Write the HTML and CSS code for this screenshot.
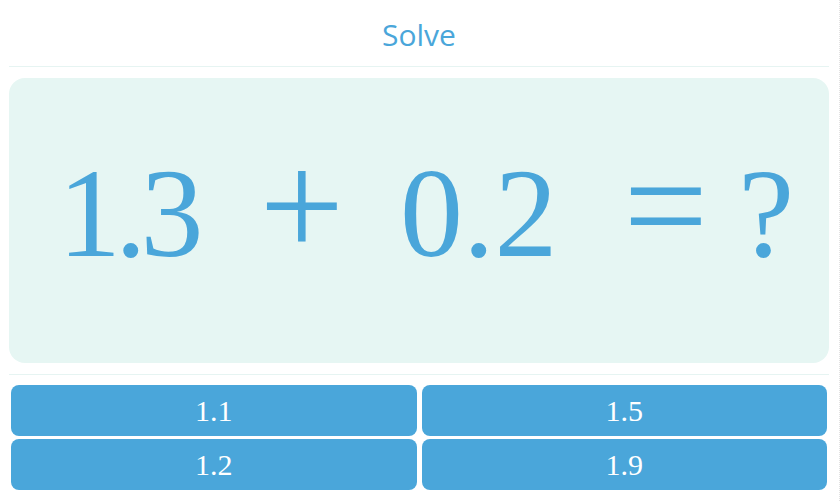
FILE: index.html
```html
<!DOCTYPE html>
<html lang="en">
<head>
    <meta charset="UTF-8">
    <meta name="viewport" content="width=device-width, initial-scale=1.0">
    <title>Solve</title>
    <link rel="stylesheet" href="styles.css">
</head>
<body>
  <div class="quiz">
    <div class="quiz-header">Solve</div>
    <div class="question-card">
      <div class="equation">
        <span class="num first">1.3</span>
        <span class="op plus">+</span>
        <span class="num">0.2</span>
        <span class="op equals">=</span>
        <span class="num">?</span>
      </div>
    </div>
    <div class="divider"></div>
    <div class="answers">
      <button class="answer">1.1</button>
      <button class="answer">1.5</button>
      <button class="answer">1.2</button>
      <button class="answer">1.9</button>
    </div>
  </div>
</body>
</html>
```

FILE: styles.css
```css
body {
  margin: 0;
  background-color: #fff;
  font-family: 'Open Sans', sans-serif;
  min-height: 100vh;
  border-right: 1px dotted #e2e2e2;
}
.quiz {
  padding: 0 10px 0 9px;
}
.quiz-header {
  height: 67px;
  display: flex;
  align-items: center;
  justify-content: center;
  padding-top: 2px;
  box-sizing: border-box;
  color: #4aa6da;
  font-size: 30px;
  border-bottom: 1px solid #e6f4f2;
}
.question-card {
  margin-top: 11px;
  height: 285px;
  background-color: #e6f6f3;
  border-radius: 16px;
  display: flex;
  align-items: center;
}
.equation {
  display: flex;
  align-items: baseline;
  font-family: 'Liberation Serif', 'Times New Roman', serif;
  font-size: 126px;
  color: #4aa6da;
  line-height: 1;
  margin-top: -32px;
  padding-left: 49px;
}
.first {
  letter-spacing: -6px;
}
.op {
  font-size: 150px;
}
.plus {
  margin: 0 56px 0 62px;
}
.equals {
  margin: 0 30px 0 66px;
}
.divider {
  margin-top: 11px;
  height: 1px;
  background-color: #e6f4f2;
}
.answers {
  margin-top: 10px;
  padding: 0 2px;
  display: grid;
  grid-template-columns: 1fr 1fr;
  grid-auto-rows: 51px;
  gap: 3px 5px;
}
.answer {
  background-color: #4aa6da;
  color: #fff;
  font-family: 'Liberation Serif', 'Times New Roman', serif;
  font-size: 30px;
  border: none;
  border-radius: 8px;
  padding: 0;
  cursor: pointer;
}
```
